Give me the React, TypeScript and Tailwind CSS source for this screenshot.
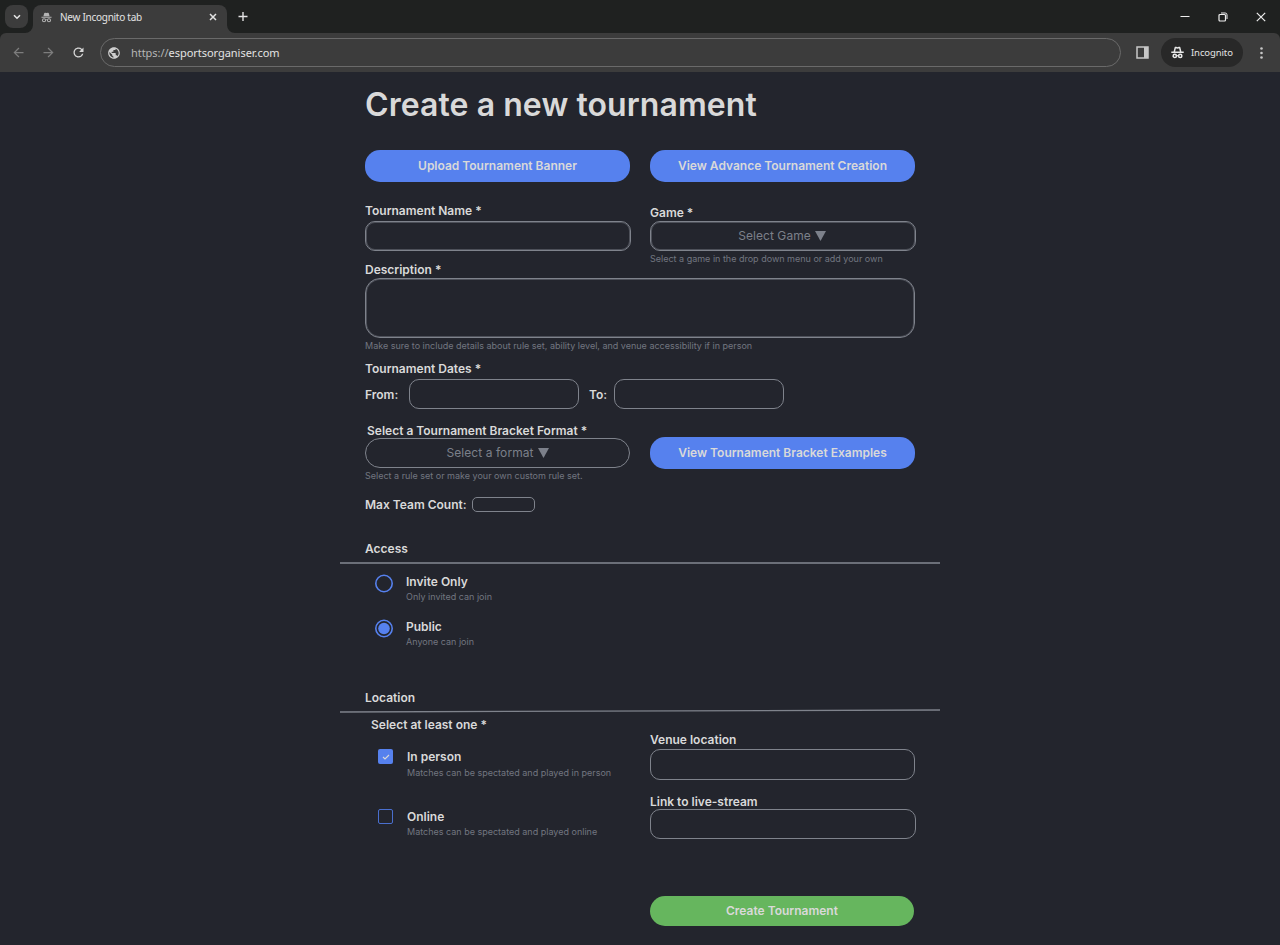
import type { ReactNode } from "react";
import { MdArrowBack, MdArrowForward, MdPublic, MdRefresh } from "react-icons/md";

function Incognito({ className }: { className: string }) {
  return (
    <svg viewBox="0 0 24 24" className={className} fill="none">
      <path
        fill="currentColor"
        d="M1 10.2h22v2.2H1zM5.2 9.2 7 2.6c.3-1 1.2-1.4 2.1-1.1l2.9.8 2.9-.8c.9-.3 1.8.1 2.1 1.1l1.8 6.6z"
      />
      <circle cx="6.6" cy="18" r="3.4" stroke="currentColor" strokeWidth="2.2" />
      <circle cx="17.4" cy="18" r="3.4" stroke="currentColor" strokeWidth="2.2" />
      <path d="M10 17.4c1.2-.9 2.8-.9 4 0" stroke="currentColor" strokeWidth="2" />
    </svg>
  );
}

function IncognitoOutline({ className }: { className: string }) {
  return (
    <svg viewBox="0 0 24 24" className={className} fill="none" stroke="currentColor">
      <path strokeWidth="2.7" d="M.5 11.4h23M6 11 7.8 3.6c.2-.8.8-1.1 1.5-.9l2.7.8 2.7-.8c.7-.2 1.3.1 1.5.9L18 11" />
      <circle cx="7" cy="18.3" r="3" strokeWidth="2.9" />
      <circle cx="17" cy="18.3" r="3" strokeWidth="2.9" />
      <path d="M10 17.9h4" strokeWidth="2.2" />
    </svg>
  );
}

function BrowserChrome() {
  return (
    <header className="bg-[#1f2120] font-['Noto_Sans','Open_Sans',sans-serif] text-[#e3e3e3]">
      <div className="flex h-[33px] items-end">
        <div className="mb-[5px] ml-[5px] flex h-[23px] w-[23px] items-center justify-center rounded-lg bg-[#3c3c3c]">
          <svg viewBox="0 0 8 6" className="h-[6px] w-2" fill="none" stroke="currentColor" strokeWidth="1.6">
            <path d="M1 1.2 4 4.2 7 1.2" />
          </svg>
        </div>
        <svg viewBox="0 0 8 8" className="-ml-[3px] h-2 w-2" fill="#3c3c3c">
          <path d="M8 0v8H0a8 8 0 0 0 8-8z" />
        </svg>
        <div className="flex h-7 w-[194px] items-center rounded-t-lg bg-[#3c3c3c] pr-[10px] pl-2">
          <Incognito className="-mt-1 h-[11px] w-[11px] text-[#b4b4b4]" />
          <span className="-mt-[4px] ml-2 flex-1 text-[10px] tracking-[-0.27px]">New Incognito tab</span>
          <svg viewBox="0 0 8 8" className="-mt-[5px] h-2 w-2" stroke="currentColor" strokeWidth="1.5">
            <path d="m1 1 6 6M7 1 1 7" />
          </svg>
        </div>
        <svg viewBox="0 0 8 8" className="h-2 w-2" fill="#3c3c3c">
          <path d="M0 0v8h8a8 8 0 0 1-8-8z" />
        </svg>
        <svg viewBox="0 0 10 10" className="mb-3 ml-[3px] h-[10px] w-[10px]" stroke="currentColor" strokeWidth="1.4">
          <path d="M5 1v9M.5 5.5h9" />
        </svg>
        <div className="flex flex-1 items-center justify-end gap-7 pr-[14px] pb-[11px] text-[#eee]">
          <svg viewBox="0 0 10 10" className="h-[10px] w-[10px]" stroke="currentColor">
            <path d="M.5 4.5h9" />
          </svg>
          <svg viewBox="0 0 10 10" className="h-[10px] w-[10px]" fill="none" stroke="currentColor">
            <rect x="1" y="2.5" width="6.5" height="6.5" rx="1" strokeWidth="1.2" />
            <path d="M3 1h4.2Q9 1 9 2.8V7" />
          </svg>
          <svg viewBox="0 0 10 10" className="h-[10px] w-[10px]" stroke="currentColor" strokeWidth="1.2">
            <path d="m.8.8 8.4 8.4M9.2.8.8 9.2" />
          </svg>
        </div>
      </div>
      <div className="flex h-[39px] items-center rounded-t-md bg-[#3c3c3c] pl-[11px]">
        <MdArrowBack className="h-[15px] w-[15px] text-[#7d7d7d]" />
        <MdArrowForward className="ml-[15px] h-[15px] w-[15px] text-[#7d7d7d]" />
        <MdRefresh className="ml-[15px] h-[15px] w-[15px] text-[#d6d6d6]" />
        <div className="ml-[14px] flex h-[29px] w-[1021px] items-center rounded-full border border-[#6a6a6a] pl-[6px]">
          <MdPublic className="h-[14px] w-[14px] text-[#cfcfcf]" />
          <span className="mt-[1px] ml-[10px] text-[11px] tracking-[-0.04px]">
            <span className="text-[#b5b5b5]">https://</span>esportsorganiser.com
          </span>
        </div>
        <svg viewBox="0 0 13 13" className="ml-[15px] h-[13px] w-[13px]" fill="none">
          <rect x="1" y="1" width="11" height="11" stroke="#c7c7c7" strokeWidth="1.5" />
          <path d="M8 1h4v11H8z" fill="#c7c7c7" />
        </svg>
        <div className="ml-3 flex h-[29px] w-[82px] items-center rounded-full bg-[#282828] pl-[10px]">
          <IncognitoOutline className="h-[13px] w-[13px] text-[#e8e8e8]" />
          <span className="mt-[1px] ml-[7px] text-[9.5px] tracking-[-0.1px]">Incognito</span>
        </div>
        <svg viewBox="0 0 3 12" className="ml-[17px] h-3 w-[3px]" fill="#c7c7c7">
          <circle cx="1.5" cy="1.5" r="1.3" />
          <circle cx="1.5" cy="6" r="1.3" />
          <circle cx="1.5" cy="10.5" r="1.3" />
        </svg>
      </div>
    </header>
  );
}

function Label({ children, className = "" }: { children: ReactNode; className?: string }) {
  return (
    <div className={`h-4 text-[12px] leading-4 font-semibold whitespace-nowrap text-[#d9d9d9] ${className}`}>
      {children}
    </div>
  );
}

function Hint({ children, className = "" }: { children: ReactNode; className?: string }) {
  return (
    <div className={`h-3 text-[9px] leading-3 whitespace-nowrap text-[#727680] ${className}`}>
      {children}
    </div>
  );
}

function PillButton({ children, className }: { children: ReactNode; className: string }) {
  return (
    <button
      type="button"
      className={`block rounded-[15px] text-[12px] font-semibold text-[#d9d9d9] ${className}`}
    >
      {children}
    </button>
  );
}

function Select({ children, className }: { children: ReactNode; className: string }) {
  return (
    <button
      type="button"
      className={`flex h-[30px] items-center justify-center gap-1 border border-[#7f838c] text-[12px] tracking-[0.07px] text-[#7c808a] ${className}`}
    >
      {children}
      <svg viewBox="0 0 11 10" className="h-[10px] w-[11px]" fill="currentColor">
        <path d="M0 0h11L5.5 10z" />
      </svg>
    </button>
  );
}

function RadioRow({ title, hint, checked }: { title: string; hint: string; checked?: boolean }) {
  return (
    <div className="flex h-[45px]">
      <svg viewBox="0 0 18 19" className="h-[19px] w-[18px]" fill="none">
        <circle cx="9" cy="9.5" r="8.2" stroke="#5681ee" strokeWidth="1.6" />
        {checked && <circle cx="9" cy="9.5" r="5.8" fill="#5681ee" />}
      </svg>
      <div className="ml-[13px]">
        <Label>{title}</Label>
        <Hint className="mt-[1px]">{hint}</Hint>
      </div>
    </div>
  );
}

function CheckRow({ title, hint, checked }: { title: string; hint: string; checked?: boolean }) {
  return (
    <div className="flex">
      {checked ? (
        <span className="flex h-[15px] w-[15px] items-center justify-center rounded-[2px] bg-[#5681ee]">
          <svg viewBox="0 0 8 6" className="h-[6px] w-2" fill="none" stroke="#d9d9d9" strokeWidth="1.1">
            <path d="M1 3 3 5 7 1" />
          </svg>
        </span>
      ) : (
        <span className="h-[15px] w-[15px] rounded-[2px] border border-[#4a6fce]" />
      )}
      <div className="ml-[14px]">
        <Label>{title}</Label>
        <Hint className={checked ? "mt-[2px]" : "mt-[1px]"}>{hint}</Hint>
      </div>
    </div>
  );
}

export default function App() {
  return (
    <div className="h-[945px] w-[1280px] overflow-hidden bg-[#23252d] font-['Inter',sans-serif]">
      <BrowserChrome />
      <main className="mx-auto w-[600px] pt-[13px]">
        <div className="px-[25px]">
          <h1 className="h-10 text-[32px] leading-10 font-semibold tracking-[0.07px] whitespace-nowrap text-[#d9d9d9]">
            Create a new tournament
          </h1>
          <div className="mt-[25px] flex gap-5">
            <PillButton className="h-8 w-[265px] bg-[#5681ee]">Upload Tournament Banner</PillButton>
            <PillButton className="h-8 w-[265px] bg-[#5681ee]">View Advance Tournament Creation</PillButton>
          </div>

          <div className="mt-[21px] flex h-[59px] gap-[19px]">
            <div>
              <Label>Tournament Name *</Label>
              <div className="mt-[2px] h-[30px] w-[266px] rounded-[10px] border border-[#7f838c] shadow-[inset_0_0_0_1px_#4d5059]" />
            </div>
            <div className="pt-[2px]">
              <Label>Game *</Label>
              <Select className="w-[266px] rounded-[10px] pr-[2px] shadow-[inset_0_0_0_1px_#4d5059]">Select Game</Select>
              <Hint className="mt-[2px]">Select a game in the drop down menu or add your own</Hint>
            </div>
          </div>

          <Label>Description *</Label>
          <div className="h-[60px] w-[550px] rounded-[15px] border border-[#7f838c] shadow-[inset_0_0_0_1px_#4d5059]" />
          <Hint className="mt-[2px]">
            Make sure to include details about rule set, ability level, and venue accessibility if in person
          </Hint>

          <Label className="mt-[9px]">Tournament Dates *</Label>
          <div className="mt-[2px] flex items-center">
            <Label className="mt-[1px] w-11">From:</Label>
            <div className="h-[30px] w-[170px] rounded-[10px] border border-[#7f838c]" />
            <Label className="mt-[1px] ml-[10px] w-[25px]">To:</Label>
            <div className="h-[30px] w-[170px] rounded-[10px] border border-[#7f838c]" />
          </div>

          <div className="mt-[14px] flex h-[59px] gap-5">
            <div>
              <Label className="-mb-[1px] pl-[2px]">Select a Tournament Bracket Format *</Label>
              <Select className="w-[265px] rounded-[15px]">Select a format</Select>
              <Hint className="mt-[2px]">Select a rule set or make your own custom rule set.</Hint>
            </div>
            <PillButton className="mt-[14px] h-8 w-[265px] bg-[#5681ee]">View Tournament Bracket Examples</PillButton>
          </div>

          <div className="mt-[15px] flex">
            <Label className="w-[107px]">Max Team Count:</Label>
            <div className="h-[15px] w-[63px] rounded-[5px] border border-[#7f838c]" />
          </div>

          <Label className="mt-7">Access</Label>
        </div>
        <div className="mt-[5px] h-[2px] bg-[#6b6f78]" />

        <div className="mt-[10px] ml-[35px] h-[116px]">
          <RadioRow title="Invite Only" hint="Only invited can join" />
          <RadioRow title="Public" hint="Anyone can join" checked />
        </div>

        <Label className="ml-[25px]">Location</Label>
        <svg viewBox="0 0 600 4" className="mt-[3px] block h-1 w-[600px]">
          <path d="M0 3 600 1" stroke="#7f838c" strokeWidth="1.3" />
        </svg>

        <div className="mt-1 flex h-[183px]">
          <div className="w-[310px]">
            <Label className="ml-[31px]">Select at least one *</Label>
            <div className="mt-4 ml-[38px] h-[60px]">
              <CheckRow title="In person" hint="Matches can be spectated and played in person" checked />
            </div>
            <div className="ml-[38px]">
              <CheckRow title="Online" hint="Matches can be spectated and played online" />
            </div>
          </div>
          <div className="pt-[15px]">
            <Label>Venue location</Label>
            <div className="mt-[1px] h-[31px] w-[265px] rounded-[10px] border border-[#7f838c]" />
            <Label className="mt-[14px]">Link to live-stream</Label>
            <div className="-mt-[1px] h-[30px] w-[266px] rounded-[10px] border border-[#7f838c]" />
          </div>
        </div>

        <PillButton className="-mt-1 ml-[310px] h-[30px] w-[264px] bg-[#66b65e]">Create Tournament</PillButton>
      </main>
    </div>
  );
}
